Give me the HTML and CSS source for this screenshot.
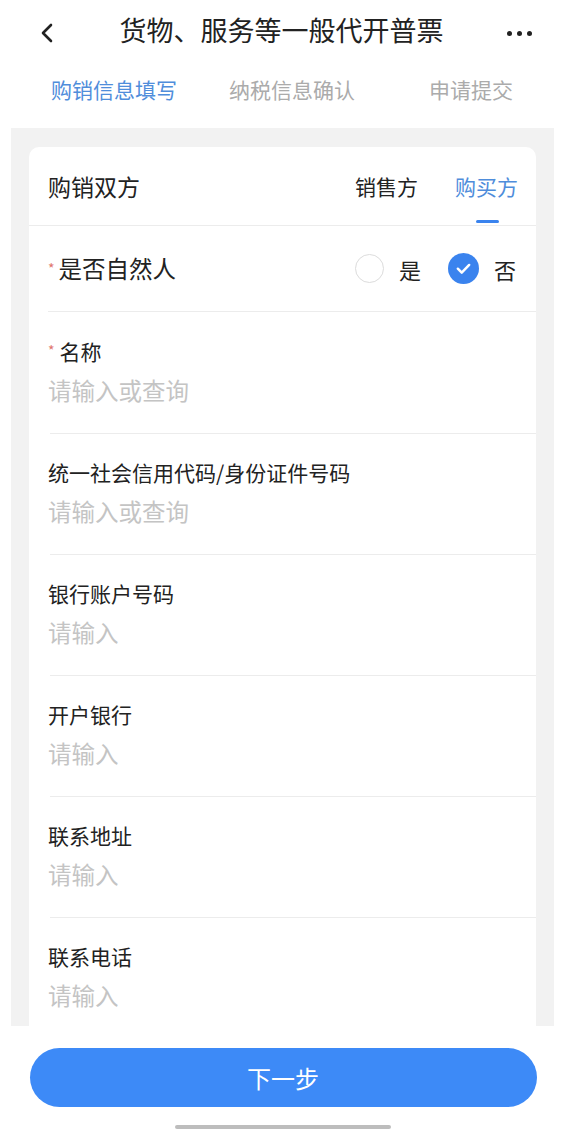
FILE: index.html
```html
<!DOCTYPE html>
<html lang="zh-CN">
<head>
<meta charset="utf-8">
<title>货物、服务等一般代开普票</title>
<link rel="stylesheet" href="styles.css">
</head>
<body>
<div class="page">
  <header class="nav">
    <span class="nav-back">
      <svg width="14" height="20" viewBox="0 0 14 20"><path d="M11 2 L3 10 L11 18" fill="none" stroke="#222" stroke-width="2.6" stroke-linecap="round" stroke-linejoin="round"/></svg>
    </span>
    <h1 class="nav-title">货物、服务等一般代开普票</h1>
    <span class="nav-more"><i></i><i></i><i></i></span>
  </header>

  <nav class="steps">
    <span class="step step-active">购销信息填写</span>
    <span class="step step-2">纳税信息确认</span>
    <span class="step step-3">申请提交</span>
  </nav>

  <main class="content">
    <section class="card">
      <div class="card-head">
        <span class="card-title">购销双方</span>
        <div class="party-tabs">
          <span class="party-tab">销售方</span>
          <span class="party-tab party-active">购买方</span>
        </div>
      </div>

      <div class="row-radio">
        <span class="label-lg"><span class="req">*</span>是否自然人</span>
        <div class="radios">
          <span class="radio"></span><span class="radio-text">是</span>
          <span class="radio radio-on">
            <svg width="31" height="31" viewBox="0 0 30 30"><circle cx="15" cy="15" r="15" fill="#3a83ee"/><path d="M9.5 15.2 L13.3 19 L20.5 11.6" fill="none" stroke="#fff" stroke-width="2.4" stroke-linecap="round" stroke-linejoin="round"/></svg>
          </span><span class="radio-text">否</span>
        </div>
      </div>

      <div class="field">
        <div class="label"><span class="req">*</span>名称</div>
        <div class="placeholder">请输入或查询</div>
      </div>
      <div class="field">
        <div class="label">统一社会信用代码/身份证件号码</div>
        <div class="placeholder">请输入或查询</div>
      </div>
      <div class="field">
        <div class="label">银行账户号码</div>
        <div class="placeholder">请输入</div>
      </div>
      <div class="field">
        <div class="label">开户银行</div>
        <div class="placeholder">请输入</div>
      </div>
      <div class="field">
        <div class="label">联系地址</div>
        <div class="placeholder">请输入</div>
      </div>
      <div class="field">
        <div class="label">联系电话</div>
        <div class="placeholder">请输入</div>
      </div>
    </section>
  </main>

  <footer class="footer">
    <button class="btn-next">下一步</button>
    <div class="home-bar"></div>
  </footer>
</div>
</body>
</html>
```

FILE: styles.css
```css
* { box-sizing: border-box; }
html, body {
  margin: 0;
  padding: 0;
  background: #fff;
}
body {
  font-family: "Noto Sans CJK SC", "Noto Sans", sans-serif;
  color: #222;
}
.page {
  width: 566px;
  height: 1131px;
  display: flex;
  flex-direction: column;
  overflow: hidden;
}

/* nav */
.nav {
  height: 70px;
  display: flex;
  align-items: center;
  justify-content: space-between;
  padding: 0 34px 6px 40px;
}
.nav-back {
  width: 16px;
  display: flex;
  align-items: center;
  margin-top: 2px;
}
.nav-title {
  margin: -4px 0 0 0;
  font-size: 27px;
  font-weight: 400;
  line-height: 34px;
  color: #222;
}
.nav-more {
  display: flex;
  gap: 5px;
  margin-top: 3px;
}
.nav-more i {
  display: block;
  width: 5px;
  height: 5px;
  border-radius: 50%;
  background: #222;
}

/* steps */
.steps {
  height: 58px;
  display: flex;
  align-items: center;
  padding: 0 0 20px 51px;
  font-size: 21px;
  line-height: 28px;
  color: #ababab;
}
.step-active { color: #4f8ddb; }
.step-2 { margin-left: 52px; }
.step-3 { margin-left: 74px; }

/* content */
.content {
  height: 898px;
  margin: 0 12px 0 11px;
  background: #f2f2f2;
  padding: 19px 18px 0 18px;
  overflow: hidden;
}
.card {
  background: #fff;
  border-radius: 10px 10px 0 0;
}
.card-head {
  height: 79px;
  display: flex;
  align-items: center;
  justify-content: space-between;
  padding: 0 18px 0 19px;
  border-bottom: 1px solid #ececec;
}
.card-title {
  font-size: 23px;
  line-height: 30px;
  color: #222;
}
.party-tabs {
  display: flex;
  gap: 37px;
}
.party-tab {
  position: relative;
  font-size: 21px;
  line-height: 28px;
  color: #222;
}
.party-active { color: #4f8ddb; }
.party-active::after {
  content: "";
  position: absolute;
  left: 50%;
  bottom: -23px;
  width: 23px;
  height: 3px;
  margin-left: -11px;
  border-radius: 2px;
  background: #3a83ee;
}

.req {
  color: #e0756e;
  font-size: 14px;
  margin-right: 5px;
  vertical-align: 4px;
}

.row-radio {
  height: 86px;
  margin-left: 19px;
  padding-right: 20px;
  display: flex;
  align-items: center;
  justify-content: space-between;
  border-bottom: 1px solid #ececec;
}
.label-lg {
  font-size: 23.5px;
  line-height: 30px;
  margin-top: -2px;
}
.label-lg .req { margin-right: 4px; }
.radios {
  display: flex;
  align-items: center;
}
.radio {
  width: 29px;
  height: 29px;
  border-radius: 50%;
  border: 1.5px solid #dcdcdc;
}
.radio-on {
  width: 31px;
  height: 31px;
  border: none;
  margin-left: 27px;
  display: flex;
}
.radio-text {
  font-size: 22px;
  line-height: 30px;
  margin-left: 15px;
}

.field {
  margin-left: 21px;
  padding: 26px 19px 28px 0;
  border-bottom: 1px solid #ececec;
}
.label {
  margin-left: -2px;
  font-size: 21px;
  line-height: 24px;
  color: #222;
}
.placeholder {
  margin-top: 12px;
  margin-left: -2px;
  font-size: 23.5px;
  line-height: 30px;
  color: #c4c4c4;
}

/* footer */
.footer {
  flex: 1;
  display: flex;
  flex-direction: column;
  align-items: center;
  padding-top: 22px;
}
.btn-next {
  width: 507px;
  height: 59px;
  border: none;
  border-radius: 30px;
  background: #3d8af7;
  color: #fff;
  font-family: "Noto Sans CJK SC", "Noto Sans", sans-serif;
  font-size: 24px;
  line-height: 30px;
  padding: 0;
}
.home-bar {
  margin-top: 18px;
  width: 216px;
  height: 4px;
  border-radius: 2px;
  background: #bdbdbd;
}
```
